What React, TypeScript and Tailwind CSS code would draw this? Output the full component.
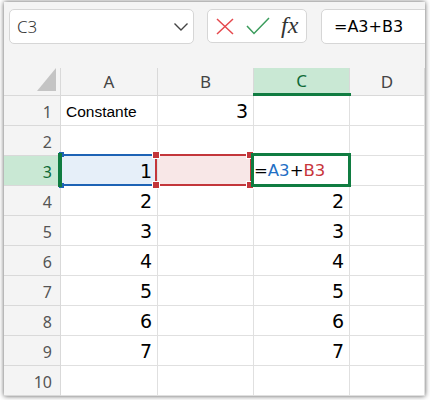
import React from 'react';

const cellNums: Record<string, string> = {
  A3: '1', A4: '2', A5: '3', A6: '4', A7: '5', A8: '6', A9: '7',
  C4: '2', C5: '3', C6: '4', C7: '5', C8: '6', C9: '7',
  B1: '3',
};

function Chevron() {
  return (
    <svg width="16" height="10" viewBox="0 0 16 10" fill="none">
      <path d="M1.5 1.5 L8 8 L14.5 1.5" stroke="#444" strokeWidth="1.4" />
    </svg>
  );
}

export default function App() {
  const cols = ['A', 'B', 'C', 'D'];
  const rows = [1, 2, 3, 4, 5, 6, 7, 8, 9, 10];
  return (
    <div className="w-[430px] h-[400px] bg-white overflow-hidden">
      <div className="ml-[4px] mt-[2px] w-[421px] h-[394px] bg-[#f4f4f4] overflow-hidden shadow-[0_0_5px_rgba(0,0,0,0.65)] flex flex-col">
        {/* toolbar */}
        <div className="h-[66px] flex items-start pt-[7px] pl-[5px]">
          <div className="w-[185px] h-[35px] bg-white border border-[#d6d6d6] rounded-[5px] flex items-center justify-between pl-[7px] pr-[4px]">
            <span className="text-[17px] font-light text-[#333]" style={{ fontFamily: '"Noto Sans", sans-serif' }}>C3</span>
            <Chevron />
          </div>
          <div className="ml-[13px] w-[100px] h-[34px] bg-white border border-[#d6d6d6] rounded-[5px] flex items-center pl-[8px]">
            <svg width="18" height="17" viewBox="0 0 18 17" fill="none">
              <path d="M1 1 L17 16 M17 1 L1 16" stroke="#e5484d" strokeWidth="1.5" />
            </svg>
            <svg className="ml-[12px]" width="24" height="18" viewBox="0 0 24 18" fill="none">
              <path d="M1 9 L8 16.5 L23 1" stroke="#3b9c5c" strokeWidth="1.5" />
            </svg>
            <span className="ml-[11px] text-[24px] italic text-[#333] leading-none -mt-[2px]" style={{ fontFamily: '"Liberation Serif", serif' }}>fx</span>
          </div>
          <div className="ml-[14px] flex-1 -mr-[10px] h-[35px] bg-white border border-[#d6d6d6] rounded-[5px] flex items-center pl-[12px]">
            <span className="text-[16px] text-black" style={{ fontFamily: '"DejaVu Sans", sans-serif' }}>=A3+B3</span>
          </div>
        </div>

        {/* grid */}
        <div className="relative grid grid-cols-[57px_97px_96px_96px_1fr] grid-rows-[28px_repeat(10,30px)]">
          {/* header row */}
          <div className="relative border-r border-b border-[#d9d9d9] bg-[#f4f4f4]">
            <svg className="absolute left-[33px] top-0" width="19" height="23" viewBox="0 0 19 23">
              <polygon points="0,23 19,0 19,23" fill="#c4c4c4" />
            </svg>
          </div>
          {cols.map((c) => (
            <div
              key={c}
              className={
                c === 'C'
                  ? 'border-r border-[#d9d9d9] bg-[#c9e8d4] flex items-center justify-center text-[17px] text-[#0f6a37] pb-[2px]'
                  : 'border-r border-b border-[#d9d9d9] bg-[#f4f4f4] flex items-center justify-center text-[17px] text-[#444]'
              }
              style={{ fontFamily: '"Noto Sans", sans-serif' }}
            >
              {c}
            </div>
          ))}
          {rows.map((r) => (
            <React.Fragment key={r}>
              <div
                className={
                  r === 3
                    ? 'border-r border-b border-[#d9d9d9] bg-[#c9e8d4] flex items-center justify-end pr-[8px] pt-[3px] text-[16px] text-[#0f6a37]'
                    : 'border-r border-b border-[#d9d9d9] bg-[#f4f4f4] flex items-center justify-end pr-[8px] pt-[3px] text-[16px] text-[#555]'
                }
                style={{ fontFamily: '"Noto Sans", sans-serif' }}
              >
                {r}
              </div>
              {cols.map((c) => {
                const id = c + r;
                const bg = id === 'A3' ? 'bg-[#e6eff9]' : id === 'B3' ? 'bg-[#f8e7e7]' : 'bg-white';
                if (id === 'A1') {
                  return (
                    <div key={id} className="border-r border-b border-[#e0e0e0] bg-white flex items-center pl-[5px] pt-[3px] text-[15.5px] text-black whitespace-nowrap" style={{ fontFamily: '"Liberation Sans", sans-serif' }}>
                      Constante
                    </div>
                  );
                }
                if (id === 'C3') {
                  return (
                    <div key={id} className="border-r border-b border-[#e0e0e0] bg-white flex items-center pl-[0px] pt-[1px] text-[16.5px] whitespace-nowrap" style={{ fontFamily: '"DejaVu Sans", sans-serif' }}>
                      <span className="text-black">=</span>
                      <span className="text-[#1f6fc5]">A3</span>
                      <span className="text-black">+</span>
                      <span className="text-[#c8353a]">B3</span>
                    </div>
                  );
                }
                return (
                  <div key={id} className={`border-r border-b border-[#e0e0e0] ${bg} flex items-center justify-end pr-[5px] pt-[2px] text-[19px] text-black`} style={{ fontFamily: '"DejaVu Sans", sans-serif' }}>
                    {cellNums[id] ?? ''}
                  </div>
                );
              })}
            </React.Fragment>
          ))}

          {/* overlays */}
          {/* column C header bottom bar */}
          <div className="absolute left-[249px] top-[25px] w-[98px] h-[3px] bg-[#107c41]" />
          {/* blue range */}
          <div className="absolute left-[56px] top-[86px] w-[100px] h-[32px] border-2 border-l-0 border-r-0 border-[#1d63b5]" />
          <div className="absolute left-[55px] top-[84px] w-[5px] h-[5px] bg-[#1d63b5]" />
          <div className="absolute left-[55px] top-[115px] w-[5px] h-[5px] bg-[#1d63b5]" />
          {/* row 3 header bar */}
          <div className="absolute left-[54px] top-[85px] w-[4px] h-[34px] bg-[#107c41]" />
          {/* red range */}
          <div className="absolute left-[151px] top-[86px] w-[97px] h-[32px] border-2 border-[#c3363b]" />
          <div className="absolute left-[148px] top-[83px] w-[8px] h-[8px] bg-[#c3363b] border border-white" />
          <div className="absolute left-[148px] top-[113px] w-[8px] h-[8px] bg-[#c3363b] border border-white" />
          <div className="absolute left-[242px] top-[83px] w-[8px] h-[8px] bg-[#c3363b] border border-white" />
          <div className="absolute left-[242px] top-[113px] w-[8px] h-[8px] bg-[#c3363b] border border-white" />
          {/* active cell */}
          <div className="absolute left-[247px] top-[85px] w-[100px] h-[34px] border-[3px] border-[#107c41]" />
        </div>
      </div>
    </div>
  );
}
